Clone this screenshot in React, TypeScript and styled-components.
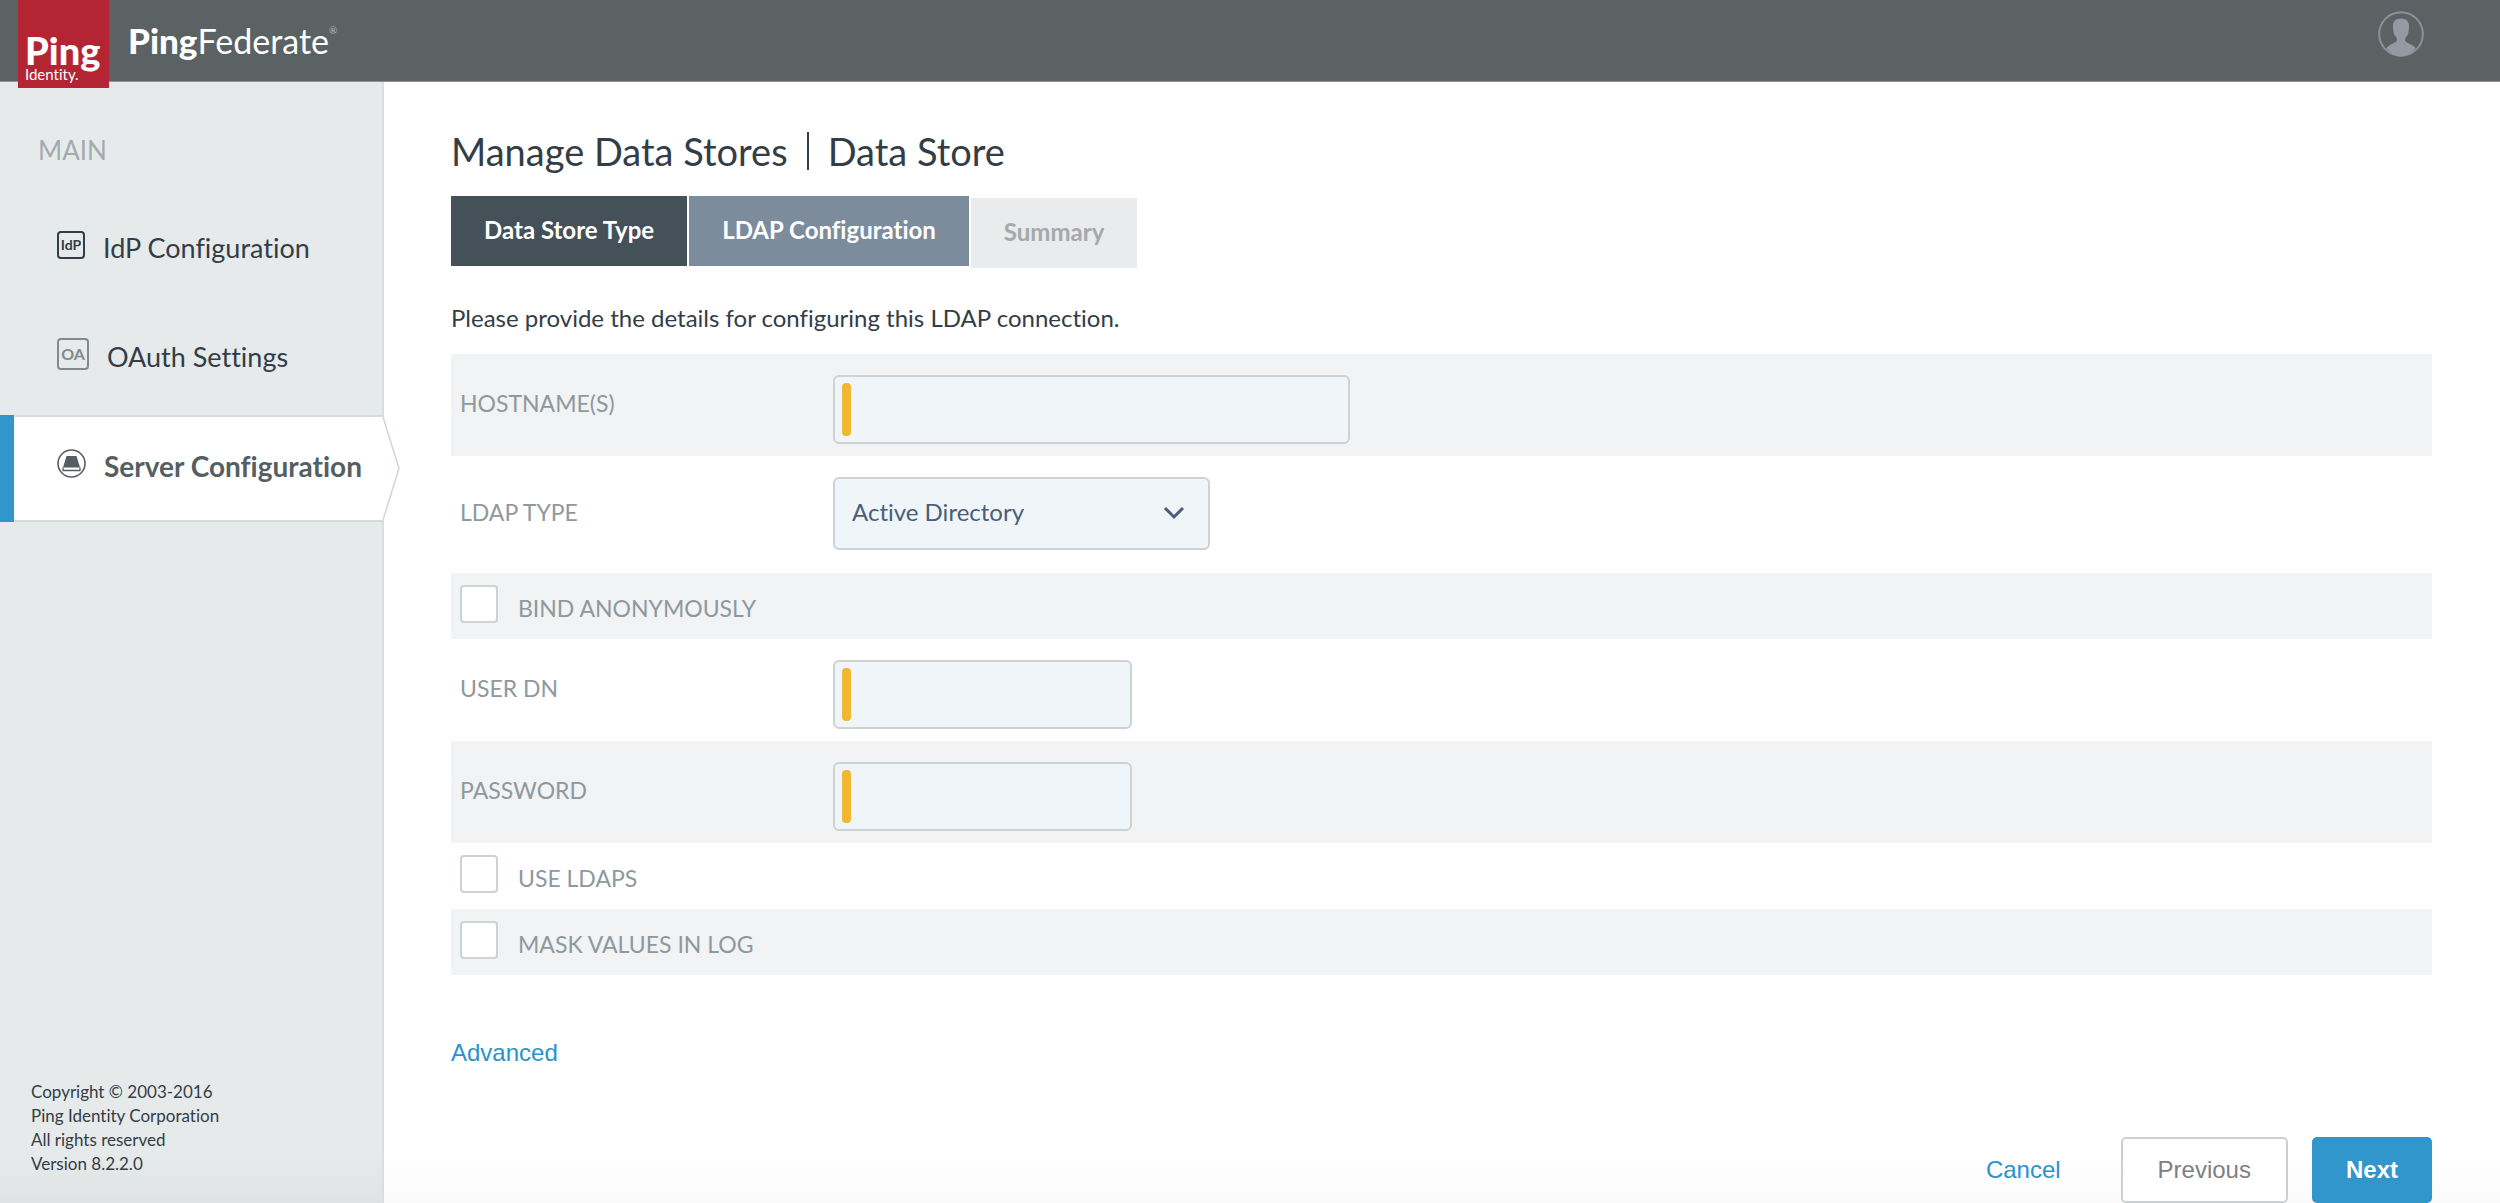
import React from "react";
import styled, { createGlobalStyle, css } from "styled-components";

const GlobalStyle = createGlobalStyle`
  *, *::before, *::after { box-sizing: border-box; }
  html, body { margin: 0; padding: 0; }
  body {
    background: #fff;
    color: #343d46;
    font-family: Lato, "Open Sans", sans-serif;
    font-size: 24px;
    line-height: 30px;
  }
  body, button, input, select { font-variant-ligatures: none; }
`;

const Page = styled.div`
  display: flex;
  flex-direction: column;
  min-height: 100vh;
`;

const Header = styled.header`
  display: flex;
  align-items: flex-start;
  height: 82px;
  padding: 0 76px 0 18px;
  background: #5b6264;
  border-bottom: 1px solid #8d9498;
`;

const LogoTile = styled.div`
  position: relative;
  z-index: 1;
  display: flex;
  flex-direction: column;
  width: 91px;
  height: 88px;
  padding: 30px 0 0 7px;
  background: #b42533;
  color: #fff;
`;

const LogoName = styled.span`
  font-size: 38px;
  line-height: 40px;
  font-weight: 900;
`;

const LogoSub = styled.span`
  font-size: 15px;
  line-height: 8px;
`;

const Product = styled.div`
  display: flex;
  align-items: baseline;
  flex: 1;
  padding: 18px 0 0 19px;
  color: #fff;
  font-size: 34px;
  line-height: 44px;

  strong { font-size: 35px; font-weight: 900; }
  sup { align-self: flex-start; font-size: 10px; line-height: 24px; color: #b5babc; }
`;

const UserButton = styled.button`
  display: block;
  margin-top: 11px;
  padding: 0;
  border: 0;
  background: none;
  line-height: 0;
`;

const Body = styled.div`
  display: flex;
  flex: 1;
`;

const Sidebar = styled.aside`
  display: flex;
  flex-direction: column;
  width: 384px;
  flex-shrink: 0;
  border-right: 2px solid #d9dee0;
  background: linear-gradient(to top, #dfe3e4, #e6eaeb 50px);
`;

const SidebarHeading = styled.h2`
  margin: 52px 0 31px 38px;
  color: #a5aaaf;
  font-size: 26px;
  line-height: 32px;
  font-weight: 400;
`;

const NavList = styled.nav`
  display: flex;
  flex-direction: column;
  gap: 2px;
`;

const NavItem = styled.a<{ $active?: boolean }>`
  position: relative;
  display: flex;
  align-items: center;
  gap: 18px;
  height: 107px;
  padding: 0 0 11px 57px;
  color: #343d46;
  font-size: 27px;
  line-height: 32px;
  text-decoration: none;
  white-space: nowrap;

  ${(p) =>
    p.$active &&
    css`
      margin-right: -2px;
      border: solid #d5dadb;
      border-width: 2px 0;
      background: #fff;
      color: #555f62;
      font-size: 28px;
      font-weight: 700;

      &::before {
        content: "";
        position: absolute;
        top: -2px;
        bottom: -2px;
        left: 0;
        width: 14px;
        background: #3096cb;
      }
    `}
`;

const NavText = styled.span`
  padding-top: 5px;
`;

const NavBadge = styled.span<{ $muted?: boolean }>`
  display: flex;
  align-items: center;
  justify-content: center;
  width: ${(p) => (p.$muted ? 32 : 28)}px;
  height: ${(p) => (p.$muted ? 32 : 28)}px;
  border: 2px solid ${(p) => (p.$muted ? "#83898c" : "#343d46")};
  border-radius: 4px;
  color: ${(p) => (p.$muted ? "#83898c" : "#343d46")};
  font-size: ${(p) => (p.$muted ? 16 : 14)}px;
  line-height: 16px;
  font-weight: 700;
`;

const Pointer = styled.svg`
  position: absolute;
  top: 0;
  left: 100%;
  margin-left: -16px;
`;

const Copyright = styled.footer`
  margin-top: auto;
  padding: 0 0 27px 31px;
  color: #343d46;
  font-size: 17px;
  line-height: 24px;
`;

const Main = styled.main`
  flex: 1;
  min-width: 0;
  padding: 47px 68px 0 67px;
  background: linear-gradient(to top, #fafafa, #fff 50px);
`;

const Title = styled.h1`
  display: flex;
  align-items: center;
  margin: 0;
  font-size: 38px;
  line-height: 44px;
  font-weight: 400;
`;

const TitleDivider = styled.span`
  width: 2px;
  height: 38px;
  margin: 0 19px;
  background: #343d46;
`;

const Tabs = styled.nav`
  display: flex;
  gap: 2px;
  margin-top: 23px;
`;

const Tab = styled.button<{ $tone: "done" | "current" | "next" }>`
  height: 70px;
  margin: ${(p) => (p.$tone === "next" ? "2px 0 0" : 0)};
  padding: 0 33px 2px;
  border: 0;
  background: ${(p) => ({ done: "#445159", current: "#7c8c9d", next: "#e9ebec" })[p.$tone]};
  color: ${(p) => (p.$tone === "next" ? "#a5a9ac" : "#fff")};
  font-family: Lato, "Open Sans", sans-serif;
  font-size: 24px;
  line-height: 30px;
  font-weight: 700;
`;

const Intro = styled.p`
  margin: 35px 0 21px;
`;

const Form = styled.form`
  color: #8f989d;
`;

const FieldRow = styled.div<{ $shaded?: boolean }>`
  display: grid;
  grid-template-columns: 373px 1fr;
  align-items: start;
  padding: 21px 9px 12px;
  background: ${(p) => (p.$shaded ? "#f1f3f5" : "transparent")};
`;

const SelectRow = styled(FieldRow)`
  padding-bottom: 23px;
`;

const FieldLabel = styled.label<{ $tall?: boolean }>`
  padding-top: ${(p) => (p.$tall ? 20 : 13)}px;
  font-size: 23px;
`;

const RequiredField = styled.div<{ $wide?: boolean }>`
  position: relative;
  width: ${(p) => (p.$wide ? 517 : 299)}px;

  &::before {
    content: "";
    position: absolute;
    top: 8px;
    bottom: 8px;
    left: 9px;
    width: 9px;
    border-radius: 4px;
    background: #f0b732;
  }
`;

const control = css`
  display: block;
  width: 100%;
  border: 2px solid #cdd2d3;
  border-radius: 6px;
  background: #eff5f8;
  color: #495e78;
  font-family: Lato, "Open Sans", sans-serif;
  font-size: 24px;
  line-height: 30px;
`;

const TextBox = styled.input`
  ${control}
  height: 69px;
  padding: 0 24px;
`;

const SelectWrap = styled.div`
  position: relative;
  width: 377px;

  svg { position: absolute; right: 25px; top: 28px; pointer-events: none; }
`;

const SelectBox = styled.select`
  ${control}
  height: 73px;
  padding: 0 48px 4px 17px;
  appearance: none;
`;

const CheckRow = styled.div<{ $shaded?: boolean }>`
  display: flex;
  align-items: flex-start;
  gap: 20px;
  padding: 12px 9px 16px;
  background: ${(p) => (p.$shaded ? "#f1f3f5" : "transparent")};

  label { padding-top: 8px; font-size: 23px; }
`;

const CheckBox = styled.input`
  appearance: none;
  width: 38px;
  height: 38px;
  margin: 0;
  border: 2px solid #cdd2d3;
  border-radius: 4px;
  background: #fff;
`;

const Advanced = styled.a`
  display: inline-block;
  margin-top: 63px;
  color: #2a93c9;
  font-family: "Liberation Sans", Arial, sans-serif;
  text-decoration: none;
`;

const Actions = styled.div`
  display: flex;
  justify-content: flex-end;
  align-items: center;
  gap: 24px;
  margin-top: 69px;
`;

const Button = styled.button<{ $kind: "link" | "plain" | "primary" }>`
  height: 66px;
  padding: 0 36px;
  border: 0;
  border-radius: 5px;
  background: none;
  color: #2a93c9;
  font: 400 24px/30px "Liberation Sans", Arial, sans-serif;

  ${(p) =>
    p.$kind === "plain" &&
    css`
      padding: 0 35px;
      border: 2px solid #cdd0d0;
      background: #fff;
      color: #7d8083;
    `}
  ${(p) =>
    p.$kind === "primary" &&
    css`
      padding: 0 34px;
      background: #3096cb;
      color: #fff;
      font-weight: 700;
    `}
`;

const UserIcon = () => (
  <svg width="46" height="46" viewBox="0 0 46 46" aria-hidden="true">
    <circle cx="23" cy="23" r="21.8" fill="none" stroke="#8a9297" strokeWidth="2" />
    <path
      d="M23 7.5c-5.500 0-8.300 3-8 8.500.1 5 .9 7.500 2.600 9.500 1.600 2 1.900 4.200.2 5.500-2 1.500-6.500 2.600-9.600 6.300A21.500 21.500 0 0 0 23 45.500a21.500 21.500 0 0 0 14.800-8.200c-3.100-3.700-7.600-4.800-9.600-6.300-1.700-1.300-1.400-3.500.2-5.500 1.700-2 2.500-4.500 2.600-9.500.3-5.500-2.500-8.500-8-8.500z"
      fill="#929aa4"
    />
  </svg>
);

const ServerIcon = () => (
  <svg width="29" height="29" viewBox="0 0 29 29" aria-hidden="true">
    <circle cx="14.500" cy="14.500" r="13.500" fill="none" stroke="#555f62" strokeWidth="1.600" />
    <path d="M9.500 7h10l3.500 11.500H6z" fill="#555f62" />
    <path d="M6 18.500v3h17v-3" fill="none" stroke="#555f62" strokeWidth="1.300" />
  </svg>
);

const textFields = [
  { id: "user-dn", label: "USER DN", type: "text", shaded: false },
  { id: "password", label: "PASSWORD", type: "password", shaded: true },
];

export default function App() {
  return (
    <Page>
      <GlobalStyle />
      <Header>
        <LogoTile>
          <LogoName>Ping</LogoName>
          <LogoSub>Identity.</LogoSub>
        </LogoTile>
        <Product>
          <strong>Ping</strong>
          <span>Federate</span>
          <sup>®</sup>
        </Product>
        <UserButton aria-label="Account">
          <UserIcon />
        </UserButton>
      </Header>
      <Body>
        <Sidebar>
          <SidebarHeading>MAIN</SidebarHeading>
          <NavList>
            <NavItem href="#idp">
              <NavBadge>IdP</NavBadge>
              <NavText>IdP Configuration</NavText>
            </NavItem>
            <NavItem href="#oauth">
              <NavBadge $muted>OA</NavBadge>
              <NavText>OAuth Settings</NavText>
            </NavItem>
            <NavItem href="#server" $active aria-current="page">
              <ServerIcon />
              <NavText>Server Configuration</NavText>
              <Pointer width="34" height="103" viewBox="0 0 34 103" aria-hidden="true">
                <path d="M0 0H15L31 51.500 15 103H0z" fill="#fff" />
                <path d="M15 0L31 51.500 15 103" fill="none" stroke="#cfd6d6" strokeWidth="1.500" />
              </Pointer>
            </NavItem>
          </NavList>
          <Copyright>
            Copyright © 2003-2016
            <br />
            Ping Identity Corporation
            <br />
            All rights reserved
            <br />
            Version 8.2.2.0
          </Copyright>
        </Sidebar>
        <Main>
          <Title>
            <span>Manage Data Stores</span>
            <TitleDivider />
            <span>Data Store</span>
          </Title>
          <Tabs>
            <Tab $tone="done">Data Store Type</Tab>
            <Tab $tone="current">LDAP Configuration</Tab>
            <Tab $tone="next">Summary</Tab>
          </Tabs>
          <Intro>Please provide the details for configuring this LDAP connection.</Intro>
          <Form>
            <FieldRow $shaded>
              <FieldLabel htmlFor="hostname">HOSTNAME(S)</FieldLabel>
              <RequiredField $wide>
                <TextBox id="hostname" type="text" />
              </RequiredField>
            </FieldRow>
            <SelectRow>
              <FieldLabel $tall htmlFor="ldap-type">LDAP TYPE</FieldLabel>
              <SelectWrap>
                <SelectBox id="ldap-type">
                  <option>Active Directory</option>
                </SelectBox>
                <svg width="22" height="16" viewBox="0 0 22 16" aria-hidden="true">
                  <path d="M2 3l9 9 9-9" fill="none" stroke="#495e78" strokeWidth="3" />
                </svg>
              </SelectWrap>
            </SelectRow>
            <CheckRow $shaded>
              <CheckBox type="checkbox" id="bind" />
              <label htmlFor="bind">BIND ANONYMOUSLY</label>
            </CheckRow>
            {textFields.map((f) => (
              <FieldRow key={f.id} $shaded={f.shaded}>
                <FieldLabel htmlFor={f.id}>{f.label}</FieldLabel>
                <RequiredField>
                  <TextBox id={f.id} type={f.type} />
                </RequiredField>
              </FieldRow>
            ))}
            <CheckRow>
              <CheckBox type="checkbox" id="ldaps" />
              <label htmlFor="ldaps">USE LDAPS</label>
            </CheckRow>
            <CheckRow $shaded>
              <CheckBox type="checkbox" id="mask" />
              <label htmlFor="mask">MASK VALUES IN LOG</label>
            </CheckRow>
          </Form>
          <Advanced href="#advanced">Advanced</Advanced>
          <Actions>
            <Button $kind="link">Cancel</Button>
            <Button $kind="plain">Previous</Button>
            <Button $kind="primary">Next</Button>
          </Actions>
        </Main>
      </Body>
    </Page>
  );
}
